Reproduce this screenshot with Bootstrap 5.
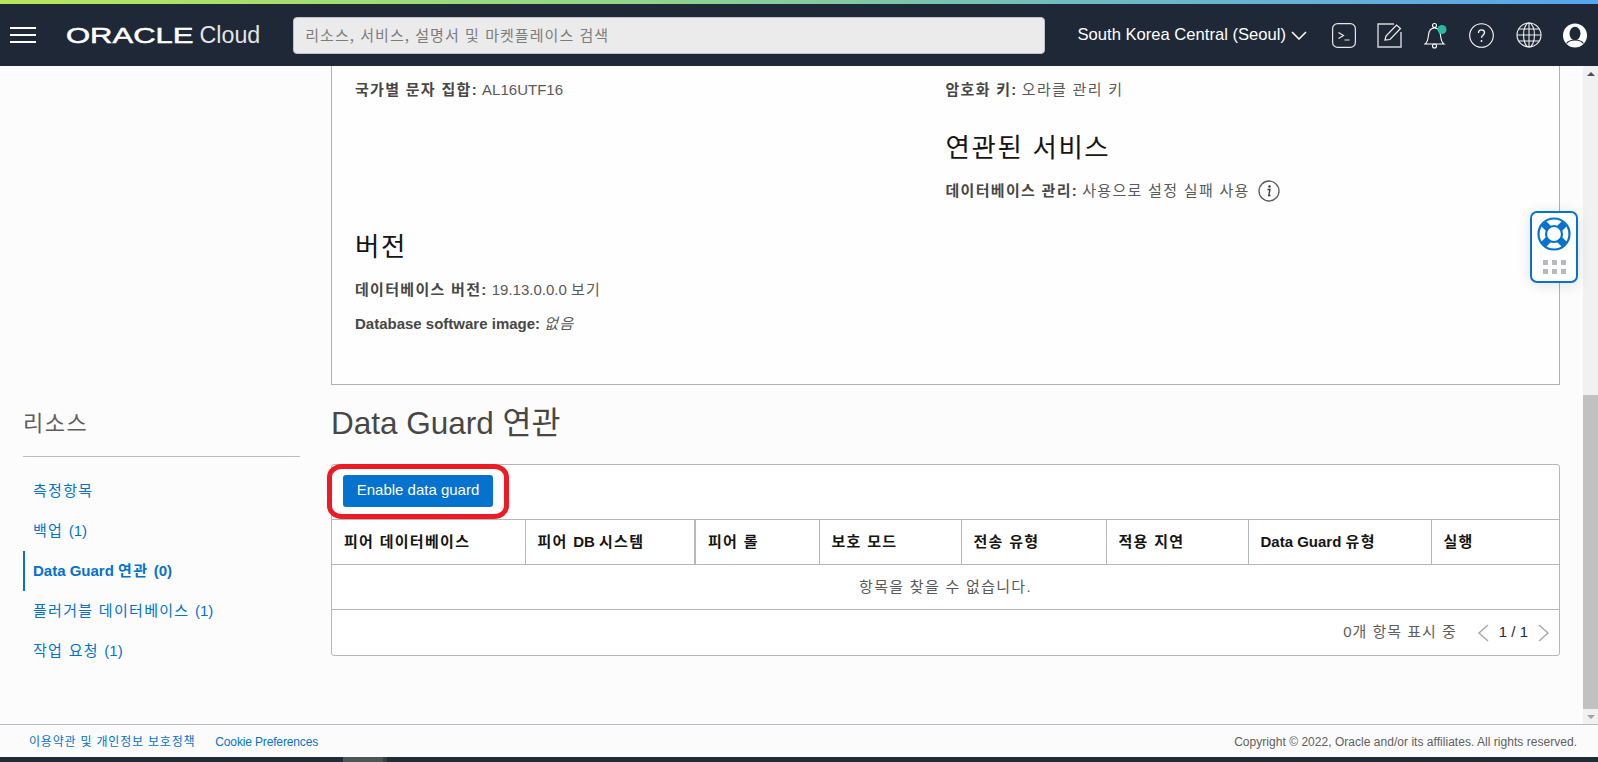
<!DOCTYPE html>
<html lang="ko">
<head>
<meta charset="utf-8">
<title>Oracle Cloud</title>
<link href="https://cdn.jsdelivr.net/npm/bootstrap@5.3.0/dist/css/bootstrap.min.css" rel="stylesheet">
<style>
html,body{height:762px;overflow:hidden}
body{font-family:"Liberation Sans","Noto Sans CJK KR",Arial,sans-serif;font-size:15px;color:#484745;background:#fcfcfc;line-height:20px}
.ko{letter-spacing:1.3px}
.stripe{height:4px;background:linear-gradient(90deg,#b6e65a 0%,#8fd58a 40%,#6cbac4 70%,#57a5ee 100%)}
.topbar{height:62px;background:#1e2836;color:#fff;padding:0 11px 0 10px}
.burger{width:26px;height:16px;display:flex;flex-direction:column;justify-content:space-between;margin-right:30px}
.burger i{display:block;height:2px;background:#fff}
.logo{width:196px;height:30px;display:block;margin-right:32px}
.logo text{fill:#fff;font-family:"Liberation Sans",sans-serif}
.searchbox{width:754px;height:37px;background:#ebebeb;border:1px solid #bfc2c6;border-radius:4px;color:#7c7c7c;padding:0 11px;font-size:15px;font-family:"Noto Sans CJK KR",sans-serif;letter-spacing:1.05px;margin-right:33px;display:flex;align-items:center;white-space:nowrap}
.region{font-size:16.6px;white-space:nowrap;margin-right:26px;display:flex;align-items:center;gap:5px;width:228px}
.region svg{flex:none}
.ico-row{display:flex;align-items:center;gap:21.5px}
.ico-row svg{display:block}
.workarea{height:658px;overflow:hidden}
.side{width:331px;flex:none;padding:344px 31px 0 23px}
.side h2{font-size:22px;line-height:28px;font-weight:400;color:#5f5e5c;margin:0;padding-bottom:18px;border-bottom:1px solid #b9bcc2;letter-spacing:1.5px}
.side-links{margin-top:14px}
.side-links a{display:flex;align-items:center;height:40px;font-size:15px;color:#0572ce;text-decoration:none;border-left:2px solid transparent;padding-left:8px;white-space:pre}
.side-links a.on{font-weight:700;border-left-color:#0572ce}
.mainpane{width:1229px;flex:none}
.infopanel{height:319px;border:1px solid #adb0b4;border-top:0;background:#fefefe;padding:14px 23px 0}
.infopanel p{margin:0}
.infopanel b{color:#484745}
.infopanel .val{color:#5a5958}
.sect{font-size:26.5px;line-height:34px;font-weight:400;color:#161513;margin:0;letter-spacing:1.6px}
.infopanel .lblock1{margin-top:130px}
.infopanel .pt-row1{margin-top:16px}
.infopanel .pt-row2{margin-top:14px}
.infopanel .rblock1{margin-top:31px}
.infopanel .pt-row3{margin-top:15px}
.pagetitle{font-size:31.5px;line-height:38px;font-weight:400;color:#484745;margin:19px 0 22px}
.resultbox{border:1px solid #b3b8c0;border-radius:3px;background:#fff;position:relative;--bs-card-border-color:#b3b8c0}
.toolrow{height:54px;padding:10px 11px 0}
.enable{background:#0572ce;border:0;border-radius:3px;color:#fff;font-size:15px;width:150px;height:32px;padding:0 0 1px}
.enable:hover{background:#0572ce}
.redring{position:absolute;left:-5px;top:-1px;width:182px;height:55px;border:5px solid #ed1c24;border-radius:15px/13px;pointer-events:none}
.dgtable{table-layout:fixed;width:100%;margin:0;font-size:15px;--bs-table-bg:transparent;--bs-table-border-color:#b3b8c0}
.dgtable th{height:45px;padding:0 0 0 12px;vertical-align:middle;font-weight:700;color:#161513;border:0;border-top:1px solid #b3b8c0;border-bottom:1px solid #b3b8c0;border-left:1px solid #b3b8c0;white-space:nowrap}
.dgtable th:first-child{border-left:0}
.dgtable th.dbl{border-left-width:2px}
.dgtable td{height:45px;padding:0;vertical-align:middle;text-align:center;color:#5a5958;border:0;border-bottom:1px solid #b3b8c0}
.pager{height:45px;padding:0 9px 2px 0;color:#5f5e5c}
.pager svg{margin-top:3px}
.pager .count{margin-right:20px;letter-spacing:1px}
.pager .pg{margin:0 10px;color:#2b2a35}
.sbar{width:15px;flex:none;margin-left:23px;background:#f1f1f1;display:flex;flex-direction:column}
.sbar .arr{height:15px;display:flex;align-items:center;justify-content:center;flex:none}
.sbar .gap{height:314px;flex:none}
.sbar .thumb{flex:1;background:#c1c1c1}
.tri-u{width:0;height:0;border:4px solid transparent;border-top:0;border-bottom:4px solid #505050}
.tri-d{width:0;height:0;border:4px solid transparent;border-bottom:0;border-top:4px solid #a3a3a3}
.helpw{position:absolute;left:1530px;top:145px;width:48px;height:72px;background:#fff;border:2px solid #0572ce;border-radius:7px;padding:4px 0 0;box-shadow:0 2px 14px rgba(0,0,0,.12)}
.helpw svg{display:block;margin:0 auto}
.dots{display:grid;grid-template-columns:repeat(3,5px);gap:4px;justify-content:center;margin-top:9px}
.dots i{display:block;height:5px;background:#b5b9c0}
.footbar{height:33px;border-top:1px solid #b9bcc2;background:#fbfbfb;padding:2px 21px 0 29px;font-size:12px;color:#5f5e5c}
.footbar a{color:#0572ce;text-decoration:none;margin-right:20px;letter-spacing:-.15px}
.footbar a.fko{letter-spacing:.8px}
.footbar .copy{letter-spacing:.03px}
.endbar{height:5px;background:#1e2c36;display:flex}
.endbar i{display:block;margin-left:343px;width:44px;background:#4a5657;border-right:4px solid #353f42}
</style>
</head>
<body>
<div class="stripe"></div>
<header class="topbar d-flex align-items-center">
  <div class="burger"><i></i><i></i><i></i></div>
  <svg class="logo" viewBox="0 0 196 30" aria-label="Oracle Cloud">
    <text x="0" y="23.500" font-size="22" font-weight="400" stroke="#fff" stroke-width=".5" textLength="128" lengthAdjust="spacingAndGlyphs">ORACLE</text>
    <text x="134" y="23.500" font-size="24" textLength="61" lengthAdjust="spacingAndGlyphs" opacity=".88">Cloud</text>
  </svg>
  <div class="searchbox">리소스, 서비스, 설명서 및 마켓플레이스 검색</div>
  <div class="region">South Korea Central (Seoul)
    <svg width="16" height="9" viewBox="0 0 16 9" fill="none" stroke="#fff" stroke-width="1.500"><path d="M1 1l7 7 7-7"/></svg>
  </div>
  <div class="ico-row">
    <svg width="24" height="25" viewBox="0 0 24 25" fill="none" stroke="#e8e8e8" stroke-width="1.200"><rect x=".6" y=".6" width="22.800" height="23.800" rx="5"/><path d="M6.500 9.500l5 3-5 3M12.500 17h5" /></svg>
    <svg width="25" height="25" viewBox="0 0 25 25" fill="none" stroke="#d6d6d6" stroke-width="1.400"><path d="M17 1H1v23h23V9"/><path d="M8 17l1-4L19.500 2l4 3.500L13 16.500z" stroke="#f0f0f0" stroke-width="1.200"/></svg>
    <svg width="24" height="27" viewBox="0 0 24 27" fill="none" stroke="#fff" stroke-width="1.100"><path d="M1 22c3-2 3-5 3.500-9 .5-5 3-7 6-7s5.500 2 6 7c.5 4 .5 7 3.500 9z"/><circle cx="10.500" cy="3.500" r="2"/><circle cx="10.500" cy="24" r="2"/><circle cx="18" cy="7.500" r="4.500" fill="#2bb8a0" stroke="none"/></svg>
    <svg width="25" height="25" viewBox="0 0 25 25" fill="none" stroke="#fff" stroke-width="1.100"><circle cx="12.500" cy="12.500" r="11.800"/><path d="M9.500 10c0-2 1.400-3.200 3-3.200s3 1.100 3 2.800c0 2.600-3 2.600-3 5.200" stroke-width="1.300"/><circle cx="12.500" cy="18" r=".9" fill="#fff" stroke="none"/></svg>
    <svg width="26" height="26" viewBox="0 0 26 26" fill="none" stroke="#f0f0f0" stroke-width="1.100"><circle cx="13" cy="13" r="12"/><ellipse cx="13" cy="13" rx="5.500" ry="12"/><path d="M13 1v24M1 13h24M2.800 7h20.400M2.800 19h20.400"/></svg>
    <svg width="24" height="25" viewBox="0 0 24 25"><circle cx="12" cy="12.500" r="12" fill="#fff"/><ellipse cx="12" cy="10.500" rx="5.500" ry="6.800" fill="#1e2836"/><path d="M3.500 20.500c2-2.500 5-3.500 8.500-3.500s6.500 1 8.500 3.500" fill="none" stroke="#1e2836" stroke-width="1.200"/></svg>
  </div>
</header>
<div class="workarea d-flex position-relative">
  <aside class="side">
    <h2>리소스</h2>
    <nav class="side-links d-flex flex-column">
      <a href="#"><span class="ko">측정항목</span></a>
      <a href="#"><span class="ko">백업 </span>(1)</a>
      <a href="#" class="on">Data Guard <span class="ko">연관 </span>(0)</a>
      <a href="#"><span class="ko">플러거블 데이터베이스 </span>(1)</a>
      <a href="#"><span class="ko">작업 요청 </span>(1)</a>
    </nav>
  </aside>
  <main class="mainpane">
    <section class="infopanel">
      <div class="row g-0">
        <div class="col-6">
          <p><b class="ko">국가별 문자 집합:</b> <span class="val">AL16UTF16</span></p>
          <h3 class="sect lblock1">버전</h3>
          <p class="pt-row1"><b class="ko">데이터베이스 버전:</b> <span class="val">19.13.0.0.0 <span class="ko">보기</span></span></p>
          <p class="pt-row2"><b>Database software image:</b> <em class="val ko">없음</em></p>
        </div>
        <div class="col-6">
          <p><b class="ko">암호화 키:</b> <span class="val ko">오라클 관리 키</span></p>
          <h3 class="sect rblock1">연관된 서비스</h3>
          <p class="d-flex align-items-center pt-row3"><b class="ko">데이터베이스 관리:</b>&nbsp;<span class="val ko">사용으로 설정 실패 사용</span>
            <svg class="ms-2" width="22" height="22" viewBox="0 0 22 22" fill="none"><circle cx="11" cy="11" r="10" stroke="#5a5958" stroke-width="1.300"/><circle cx="11.500" cy="6.500" r="1.200" fill="#3a3a3a"/><path d="M9.500 9.500h2.500l-1.300 6h1.800" stroke="#3a3a3a" stroke-width="1.300"/></svg>
          </p>
        </div>
      </div>
    </section>
    <h1 class="pagetitle">Data Guard 연관</h1>
    <section class="card resultbox">
      <div class="toolrow"><button class="btn btn-primary enable" type="button">Enable data guard</button></div>
      <table class="table dgtable">
        <colgroup><col style="width:193px"><col style="width:170px"><col style="width:124px"><col style="width:142px"><col style="width:145px"><col style="width:142px"><col style="width:183px"><col></colgroup>
        <thead><tr><th><span class="ko">피어 데이터베이스</span></th><th><span class="ko">피어 </span>DB <span class="ko">시스템</span></th><th class="dbl"><span class="ko">피어 롤</span></th><th><span class="ko">보호 모드</span></th><th><span class="ko">전송 유형</span></th><th><span class="ko">적용 지연</span></th><th>Data Guard <span class="ko">유형</span></th><th><span class="ko">실행</span></th></tr></thead>
        <tbody><tr><td colspan="8"><span class="ko">항목을 찾을 수 없습니다.</span></td></tr></tbody>
      </table>
      <div class="pager d-flex align-items-center justify-content-end">
        <span class="count ko">0개 항목 표시 중</span>
        <svg width="12" height="18" viewBox="0 0 12 18" fill="none" stroke="#a9a9a9" stroke-width="1.500"><path d="M11 1L2 9l9 8"/></svg>
        <span class="pg">1 / 1</span>
        <svg width="12" height="18" viewBox="0 0 12 18" fill="none" stroke="#a9a9a9" stroke-width="1.500"><path d="M1 1l9 8-9 8"/></svg>
      </div>
      <div class="redring"></div>
    </section>
  </main>
  <div class="sbar">
    <div class="arr"><span class="tri-u"></span></div>
    <div class="gap"></div>
    <div class="thumb"></div>
    <div class="arr"><span class="tri-d"></span></div>
  </div>
  <div class="helpw">
    <svg width="34" height="34" viewBox="0 0 34 34" fill="none" stroke="#0572ce"><circle cx="17" cy="17" r="15.500" stroke-width="2.200"/><circle cx="17" cy="17" r="8" stroke-width="2.200"/><path d="M6.500 6.500l5 5M27.500 6.500l-5 5M6.500 27.500l5-5M27.500 27.500l-5-5" stroke-width="7"/></svg>
    <div class="dots"><i></i><i></i><i></i><i></i><i></i><i></i></div>
  </div>
</div>
<footer class="footbar d-flex align-items-center justify-content-between">
  <div><a href="#" class="fko">이용약관 및 개인정보 보호정책</a><a href="#">Cookie Preferences</a></div>
  <div class="copy">Copyright © 2022, Oracle and/or its affiliates. All rights reserved.</div>
</footer>
<div class="endbar"><i></i></div>
</body>
</html>
